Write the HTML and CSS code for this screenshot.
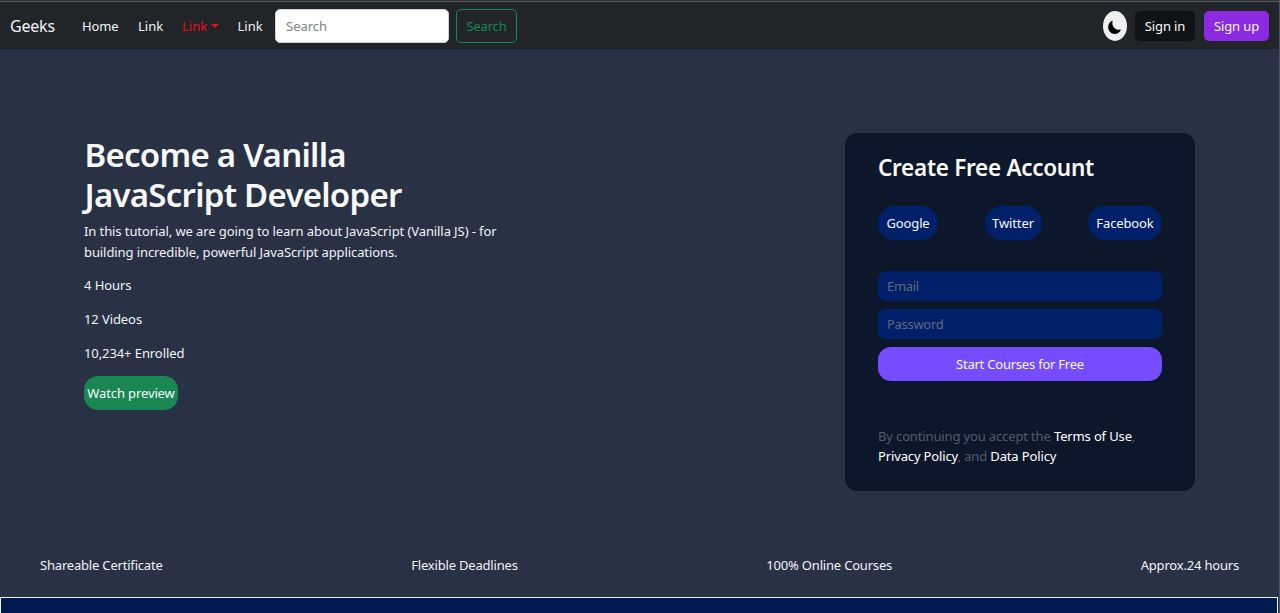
FILE: index.html
```html
<!DOCTYPE html>
<html lang="en">
<head>
<meta charset="utf-8">
<title>Geeks</title>
<link rel="stylesheet" href="styles.css">
</head>
<body>
<div class="page">
  <nav class="navbar">
    <a class="brand">Geeks</a>
    <a class="nav-link home">Home</a>
    <a class="nav-link">Link</a>
    <a class="nav-link dropdown">Link<span class="caret"></span></a>
    <a class="nav-link">Link</a>
    <input class="search-input" type="search" placeholder="Search">
    <button class="btn search-btn">Search</button>
    <div class="nav-right">
      <button class="theme-toggle" aria-label="Toggle theme">
        <svg width="13" height="14" viewBox="0 0 16 16" preserveAspectRatio="none"><path d="M5 .8A8 8 0 0 0 .2 8C.2 12.500 3.700 16 8.300 16c3.200 0 6-1.700 7.300-4.300.3-.7-.1-1-.8-.8A7.500 7.500 0 0 1 5.700 1.500c.2-.7-.2-.9-.7-.7z"/></svg>
      </button>
      <button class="btn sign-in">Sign in</button>
      <button class="btn sign-up">Sign up</button>
    </div>
  </nav>
  <main class="hero">
    <section class="intro">
      <h1 class="title">Become a Vanilla<br>JavaScript Developer</h1>
      <p class="lead">In this tutorial, we are going to learn about JavaScript (Vanilla JS) - for<br>building incredible, powerful JavaScript applications.</p>
      <p class="fact">4 Hours</p>
      <p class="fact">12 Videos</p>
      <p class="fact">10,234+ Enrolled</p>
      <button class="btn preview">Watch preview</button>
    </section>
    <section class="card">
      <h2 class="card-title">Create Free Account</h2>
      <div class="socials">
        <button class="btn social google">Google</button>
        <button class="btn social twitter">Twitter</button>
        <button class="btn social facebook">Facebook</button>
      </div>
      <input class="field" type="email" placeholder="Email">
      <input class="field" type="password" placeholder="Password">
      <button class="btn start">Start Courses for Free</button>
      <p class="terms">By continuing you accept the <a>Terms of Use</a>,<br><a>Privacy Policy</a>, and <a>Data Policy</a></p>
    </section>
  </main>
  <div class="perks">
    <span>Shareable Certificate</span>
    <span>Flexible Deadlines</span>
    <span>100% Online Courses</span>
    <span>Approx.24 hours</span>
  </div>
  <div class="next"></div>
</div>
</body>
</html>
```

FILE: styles.css
```css
* { box-sizing: border-box; }
body {
  margin: 0;
  overflow: hidden;
  background: #293145;
  color: #f1f3f6;
  font-family: "Noto Sans", sans-serif;
  font-size: 13px;
  line-height: 20.2px;
}
.page {
  height: 613px;
  display: flex;
  flex-direction: column;
  border-right: 1px solid #4b5262;
}
h1, h2, p { margin: 0; }
input, button { font: inherit; margin: 0; outline: none; }
.btn {
  border: 0;
  padding: 0;
  color: #f8f9fa;
  white-space: nowrap;
  flex: none;
}
.navbar {
  height: 49px;
  flex: none;
  display: flex;
  align-items: center;
  padding: 3px 10px 0;
  background: linear-gradient(#333438 1px, #55575b 1px, #55575b 2px, #212529 2px);
}
.brand { width: 72px; font-size: 16px; letter-spacing: -0.2px; }
.nav-link { width: 44px; white-space: nowrap; }
.home { width: 56px; letter-spacing: -0.1px; }
.dropdown { width: 55.500px; color: #e90f12; display: flex; align-items: center; }
.caret {
  margin-left: 4px;
  border-top: 4px solid;
  border-left: 4px solid transparent;
  border-right: 4px solid transparent;
}
.search-input {
  width: 174px;
  height: 34px;
  margin-left: -6.500px;
  padding: 0 10px;
  border: 1px solid #ced4da;
  border-radius: 5px;
  background: #fff;
}
.search-input::placeholder { color: #7b8187; }
.search-btn {
  width: 61px;
  height: 34px;
  margin-left: 7px;
  border: 1px solid #198754;
  border-radius: 5px;
  background: transparent;
  color: #198754;
  letter-spacing: -0.2px;
}
.nav-right { margin-left: auto; display: flex; align-items: center; }
.theme-toggle {
  width: 24px;
  height: 30px;
  padding: 2px 2px 0 0;
  margin-right: 8px;
  border: 0;
  border-radius: 50%;
  background: #efefef;
  display: flex;
  align-items: center;
  justify-content: center;
}
.sign-in, .sign-up { height: 30px; border-radius: 5px; letter-spacing: -0.1px; }
.sign-in { width: 60px; margin-right: 9px; background: #101315; }
.sign-up { width: 65px; background: #8a2be2; }
.hero {
  flex: none;
  height: 442px;
  display: flex;
  justify-content: space-between;
  align-items: flex-start;
  padding: 84px 84px 0;
}
.intro { padding-top: 2px; white-space: nowrap; }
.title {
  font-size: 33px;
  line-height: 40.400px;
  font-weight: 600;
  letter-spacing: -0.75px;
  color: #f8f9fa;
  padding-left: 0.500px;
  margin-bottom: 5.500px;
}
.lead, .fact { margin-bottom: 13.500px; letter-spacing: -0.09px; }
.preview {
  width: 94px;
  height: 34px;
  border-radius: 14px;
  background: #198754;
  letter-spacing: -0.12px;
  display: block;
}
.card {
  width: 350px;
  height: 358px;
  border-radius: 12px;
  padding: 19px 33px 0;
  background: #0d172c;
  display: flex;
  flex-direction: column;
}
.card-title {
  font-size: 22.500px;
  line-height: 32px;
  font-weight: 600;
  letter-spacing: -0.28px;
  color: #fff;
  white-space: nowrap;
}
.socials {
  display: flex;
  justify-content: space-between;
  margin: 22px 0 31px;
}
.social { height: 34px; border-radius: 17px; background: #00206a; letter-spacing: -0.12px; }
.google { width: 60px; }
.twitter { width: 57px; }
.facebook { width: 74px; }
.field {
  height: 30px;
  flex: none;
  margin-bottom: 8px;
  padding: 0 9px;
  border: 0;
  border-radius: 8px;
  background: #00206a;
  color: #fff;
  letter-spacing: -0.3px;
}
.field::placeholder { color: #5c6a80; }
.start { height: 34px; border-radius: 13px; background: #764dfe; letter-spacing: -0.22px; }
.terms { margin-top: 45px; color: #525b6a; white-space: nowrap; letter-spacing: -0.14px; }
.terms a { color: #fff; }
.perks {
  height: 106px;
  flex: none;
  display: flex;
  justify-content: space-between;
  padding: 64px 40px 0;
  white-space: nowrap;
  letter-spacing: -0.19px;
}
.next {
  flex: 1;
  margin-right: 1px;
  border: 1px solid #edf0f5;
  border-bottom: 0;
  background: #001a50;
}
```
